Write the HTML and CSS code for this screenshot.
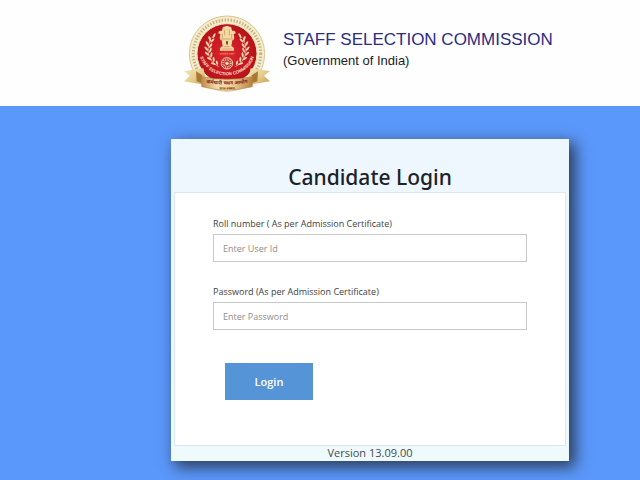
FILE: index.html
```html
<!DOCTYPE html>
<html lang="en">
<head>
<meta charset="utf-8">
<meta name="viewport" content="width=device-width, initial-scale=1">
<title>Staff Selection Commission</title>
<link rel="stylesheet" href="styles.css">
</head>
<body>
<header class="site-header">
  <svg class="emblem" viewBox="0 0 330 276" role="img" aria-label="Staff Selection Commission emblem">
    <defs>
      <linearGradient id="gold" x1="0" x2="1" y1="0" y2="1">
        <stop offset="0" stop-color="#f4e6bd"/><stop offset=".5" stop-color="#e7cd8c"/><stop offset="1" stop-color="#c79b50"/>
      </linearGradient>
      <linearGradient id="band" x1="0" x2="1">
        <stop offset="0" stop-color="#c08a4c"/><stop offset=".3" stop-color="#f3dfae"/><stop offset=".6" stop-color="#eed196"/><stop offset="1" stop-color="#b97f42"/>
      </linearGradient>
      <radialGradient id="red">
        <stop offset="0" stop-color="#dc2730"/><stop offset=".7" stop-color="#c5161f"/><stop offset="1" stop-color="#b4131b"/>
      </radialGradient>
      <path id="arc" d="M82 130 A83 72 0 0 0 248 130"/>
      <path id="ribbon-top" d="M94 223 Q164 237 236 223"/>
      <path id="ribbon-bottom" d="M120 241 Q164 247 210 241"/>
      <g id="laurel" fill="#f1d9b0">
        <path d="M140 176 Q92 150 117 88" fill="none" stroke="#f1d9b0" stroke-width="2"/>
        <ellipse cx="126" cy="83" rx="3" ry="8" transform="rotate(30 126 83)"/>
        <ellipse cx="113" cy="92" rx="3" ry="8" transform="rotate(-20 113 92)"/>
        <ellipse cx="121" cy="98" rx="3" ry="8" transform="rotate(45 121 98)"/>
        <ellipse cx="106" cy="107" rx="3" ry="8" transform="rotate(-30 106 107)"/>
        <ellipse cx="116" cy="113" rx="3" ry="8" transform="rotate(35 116 113)"/>
        <ellipse cx="103" cy="122" rx="3" ry="8" transform="rotate(-40 103 122)"/>
        <ellipse cx="115" cy="127" rx="3" ry="8" transform="rotate(25 115 127)"/>
        <ellipse cx="105" cy="137" rx="3" ry="8" transform="rotate(-50 105 137)"/>
        <ellipse cx="118" cy="141" rx="3" ry="8" transform="rotate(10 118 141)"/>
        <ellipse cx="112" cy="152" rx="3" ry="8" transform="rotate(-60 112 152)"/>
        <ellipse cx="125" cy="154" rx="3" ry="8" transform="rotate(-5 125 154)"/>
        <ellipse cx="124" cy="167" rx="3" ry="8" transform="rotate(-70 124 167)"/>
        <ellipse cx="135" cy="164" rx="3" ry="7" transform="rotate(-15 135 164)"/>
      </g>
    </defs>
    <circle cx="165" cy="137" r="113" fill="#f2ebcf" stroke="#d9c88c" stroke-width="3"/>
    <circle cx="165" cy="137" r="101" fill="none" stroke="#c8b070" stroke-width="9" stroke-dasharray="4 5"/>
    <circle cx="165" cy="137" r="90" fill="url(#red)" stroke="#eee0b2" stroke-width="3"/>
    <path d="M36 189 L94 181 L106 232 L36 220 L54 203 Z" fill="url(#gold)"/>
    <path d="M294 189 L236 181 L224 232 L294 220 L276 203 Z" fill="url(#gold)"/>
    <path d="M72 190 L91 202 L90 226 L74 220 Z" fill="#a77935"/>
    <path d="M258 190 L239 202 L240 226 L256 220 Z" fill="#a77935"/>
    <use href="#laurel"/>
    <use href="#laurel" transform="matrix(-1 0 0 1 330 0)"/>
    <g fill="#f5d9a5">
      <path d="M151 64 Q151 54 159 56 Q165 50 171 56 Q179 54 179 64 L182 79 L178 91 H152 L148 79 Z"/>
      <path d="M147 68 Q139 67 139 76 L145 79 L143 90 L154 93 V69 Z"/>
      <path d="M183 68 Q191 67 191 76 L185 79 L187 90 L176 93 V69 Z"/>
      <path d="M143 90 H187 L184 97 H146 Z"/>
      <path d="M149 96 H181 L178 115 Q187 116 186 128 H144 Q143 116 152 115 Z"/>
    </g>
    <path d="M158 65 V82 M172 65 V82 M151 78 V90 M179 78 V90 M146 93 H184 M156 116 H174 M149 123 H181" fill="none" stroke="#c08d50" stroke-width="2"/>
    <ellipse cx="165" cy="104" rx="3" ry="6" fill="#63452d"/>
    <text class="motto" x="165" y="141" text-anchor="middle">सत्यमेव जयते</text>
    <circle cx="165" cy="166" r="17" fill="#bd3537" stroke="#f1d9b0" stroke-width="3"/>
    <circle cx="165" cy="166" r="11" fill="none" stroke="#f1d9b0" stroke-width="6" stroke-dasharray="2 3"/>
    <circle cx="165" cy="166" r="5" fill="#f1d9b0"/>
    <text class="ring-text"><textPath href="#arc" startOffset="50%" text-anchor="middle">STAFF SELECTION COMMISSION</textPath></text>
    <path d="M89 206 Q165 222 241 206 V236 Q165 256 89 236 Z" fill="url(#band)" stroke="#b78949" stroke-width="2"/>
    <text class="ribbon-text"><textPath href="#ribbon-top" startOffset="50%" text-anchor="middle">कर्मचारी चयन आयोग</textPath></text>
    <text class="ribbon-small"><textPath href="#ribbon-bottom" startOffset="50%" text-anchor="middle">भारत सरकार</textPath></text>
  </svg>
  <div class="brand">
    <h1 class="brand-name">STAFF SELECTION COMMISSION</h1>
    <p class="brand-sub">(Government of India)</p>
  </div>
</header>
<main class="stage">
  <section class="card">
    <h2 class="card-title">Candidate Login</h2>
    <form class="panel">
      <div class="field">
        <label for="roll">Roll number ( As per Admission Certificate)</label>
        <input id="roll" type="text" placeholder="Enter User Id">
      </div>
      <div class="field">
        <label for="password">Password (As per Admission Certificate)</label>
        <input id="password" type="password" placeholder="Enter Password">
      </div>
      <button class="login" type="button">Login</button>
    </form>
    <footer class="version">Version 13.09.00</footer>
  </section>
</main>
</body>
</html>
```
FILE: styles.css
```css
* { box-sizing: border-box; }
html { height: 100%; }
body {
  display: flex;
  flex-direction: column;
  min-height: 100%;
  margin: 0;
  background: #5b98fb;
  color: #1b2229;
  font-family: "Open Sans", "Noto Sans", sans-serif;
}
.site-header {
  display: flex;
  align-items: flex-start;
  padding: 8px 16px 6px 172px;
  background: #fefefe;
}
.emblem { flex: none; width: 110px; height: 92px; }
.motto { fill: #eba66d; font-size: 9px; }
.ring-text { fill: #fbe4ca; font: bold 13px "Liberation Sans", sans-serif; }
.ribbon-text { fill: #832319; font-size: 15px; font-weight: bold; }
.ribbon-small { fill: #832319; font-size: 9px; font-weight: bold; }
.brand { padding: 22px 0 0 1px; font-family: "Liberation Sans", Arial, sans-serif; }
.brand-name { margin: 0; color: #2c2c83; font-size: 17px; font-weight: 400; line-height: 20px; }
.brand-sub { margin: 0; color: #1c1c1c; font-size: 13px; line-height: 22px; }
.stage { flex: 1; padding: 33px 71px 19px 171px; }
.card {
  padding: 24px 3px 0;
  background: #eef6fe;
  background-image: linear-gradient(#eef6fe 50%, #effafd 100%);
  box-shadow: 5px 5px 14px 1px rgba(35, 43, 58, .85);
}
.card-title { margin: 0; font-family: "Noto Sans", "Open Sans", sans-serif; font-size: 21px; font-weight: 500; line-height: 29px; text-align: center; }
.panel {
  display: flex;
  flex-direction: column;
  align-items: stretch;
  gap: 22px;
  padding: 23px 38px 45px;
  border: 1px solid #d9e9f2;
  background: #fff;
}
.field { display: flex; flex-direction: column; gap: 2px; }
.field label { color: #3d4043; font-size: 9px; line-height: 16px; }
.field input {
  width: 100%;
  height: 28px;
  padding: 0 9px;
  border: 1px solid #c9c9c9;
  border-radius: 0;
  background: #fff;
  color: #3d4043;
  font: 9px "Open Sans", sans-serif;
}
.field input::placeholder { color: #8e8e8e; opacity: 1; }
.login {
  align-self: flex-start;
  width: 88px;
  height: 37px;
  margin: 11px 0 0 12px;
  border: 0;
  background: #5594d6;
  color: #fff;
  font: 600 11px "Open Sans", sans-serif;
}
.version { padding-bottom: 2px; color: #444b51; font-size: 11px; line-height: 13px; text-align: center; }
```
